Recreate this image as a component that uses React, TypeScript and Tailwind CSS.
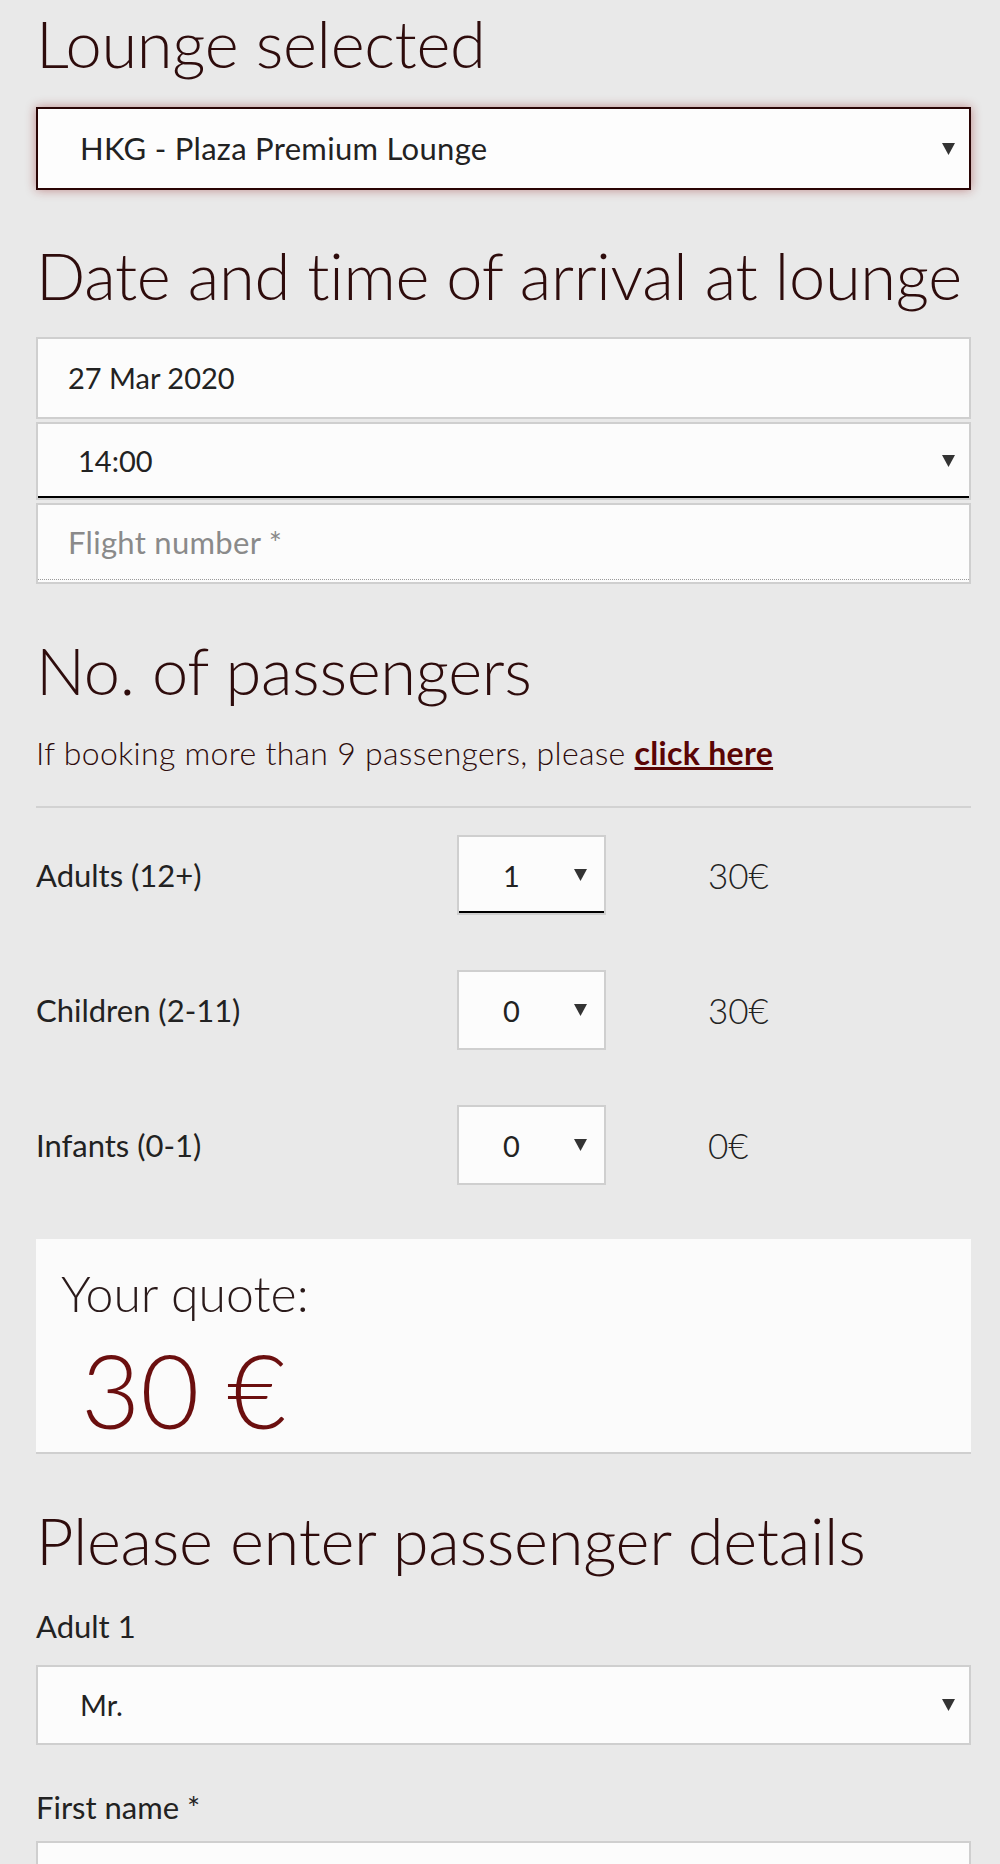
import { ReactNode } from "react";

const Arrow = () => (
  <svg width="13" height="12" viewBox="0 0 13 12" className="shrink-0">
    <polygon points="0,0 13,0 6.5,12" fill="#333" />
  </svg>
);

const Heading = ({ children }: { children: ReactNode }) => (
  <h2 className="text-[65px] font-light leading-[1.2] tracking-[-0.3px] whitespace-nowrap text-[#2e0c0c]">
    {children}
  </h2>
);

const PaxRow = ({
  label,
  value,
  price,
  focused,
}: {
  label: string;
  value: string;
  price: string;
  focused?: boolean;
}) => (
  <div className="flex items-center">
    <div className="w-[421px] text-[31px] text-[#222]">{label}</div>
    <div
      className={`w-[149px] h-[80px] border-2 border-[#cfcfcf] bg-[#fcfcfc] flex items-center pl-[44px] pr-[17px] ${
        focused ? "shadow-[inset_0_-2px_0_#000]" : ""
      }`}
    >
      <span className="flex-1 text-[29px] text-[#222]">{value}</span>
      <Arrow />
    </div>
    <div className="ml-[102px] text-[35px] font-light text-[#222]">{price}</div>
  </div>
);

export default function App() {
  return (
    <div
      className="h-[1864px] overflow-hidden bg-[#e9e9e9] pl-[36px] pr-[29px] pt-[4px]"
      style={{ fontFamily: "Lato, 'Noto Sans', sans-serif" }}
    >
      <Heading>Lounge selected</Heading>

      <div className="mt-[25px] h-[83px] border-2 border-[#2a0505] bg-[#fdfdfd] shadow-[0_0_10px_rgba(140,20,20,0.45)] flex items-center pl-[42px] pr-[14px]">
        <span className="flex-1 text-[31px] tracking-[0.3px] text-[#222]">HKG - Plaza Premium Lounge</span>
        <Arrow />
      </div>

      <div className="mt-[46px]">
        <Heading>Date and time of arrival at lounge</Heading>
      </div>

      <div className="mt-[23px] flex flex-col gap-[3px]">
        <div className="h-[82px] border-2 border-[#cfcfcf] bg-[#fcfcfc] flex items-center pl-[30px] text-[29px] text-[#222]">
          27 Mar 2020
        </div>
        <div className="h-[78px] border-2 border-[#cfcfcf] bg-[#fcfcfc] shadow-[inset_0_-2px_0_#000] flex items-center pl-[40px] pr-[14px]">
          <span className="flex-1 text-[29px] text-[#222]">14:00</span>
          <Arrow />
        </div>
        <div className="h-[81px] border-2 border-[#cfcfcf] bg-[#fcfcfc] flex flex-col">
          <div className="flex-1 flex items-center pl-[30px] text-[31px] tracking-[0.3px] text-[#8a8a8a]">
            Flight number *
          </div>
          <div className="border-b border-dotted border-[#9a9a9a] mb-[2px]" />
        </div>
      </div>

      <div className="mt-[47px]">
        <Heading>No. of passengers</Heading>
      </div>
      <p className="mt-[25px] text-[32px] font-light leading-[1.2] tracking-[0.3px] text-[#2e0c0c]">
        If booking more than 9 passengers, please{" "}
        <a className="font-bold underline text-[#5a0505]">click here</a>
      </p>

      <div className="mt-[34px] border-t-2 border-[#d2d2d2]" />

      <div className="mt-[27px] flex flex-col gap-[55px]">
        <PaxRow label="Adults (12+)" value="1" price="30€" focused />
        <PaxRow label="Children (2-11)" value="0" price="30€" />
        <PaxRow label="Infants (0-1)" value="0" price="0€" />
      </div>

      <div className="mt-[54px] h-[215px] bg-[#fbfbfb] border-b-2 border-[#cfcfcf] pl-[25px] pt-[24px]">
        <div className="text-[50px] font-light leading-[1.2] text-[#2a1a1a]">Your quote:</div>
        <div className="mt-[6px] pl-[20px] text-[102px] font-light leading-[1.2] text-[#6b0f0f]">30 €</div>
      </div>

      <div className="mt-[47px]">
        <Heading>Please enter passenger details</Heading>
      </div>

      <div className="mt-[29px] text-[31px] leading-[1.2] text-[#222]">Adult 1</div>

      <div className="mt-[19px] h-[80px] border-2 border-[#cfcfcf] bg-[#fcfcfc] flex items-center pl-[42px] pr-[14px]">
        <span className="flex-1 text-[29px] text-[#222]">Mr.</span>
        <Arrow />
      </div>

      <div className="mt-[44px] text-[31px] leading-[1.2] text-[#222]">First name *</div>

      <div className="mt-[15px] h-[60px] border-2 border-[#cfcfcf] bg-[#fcfcfc]" />
    </div>
  );
}
